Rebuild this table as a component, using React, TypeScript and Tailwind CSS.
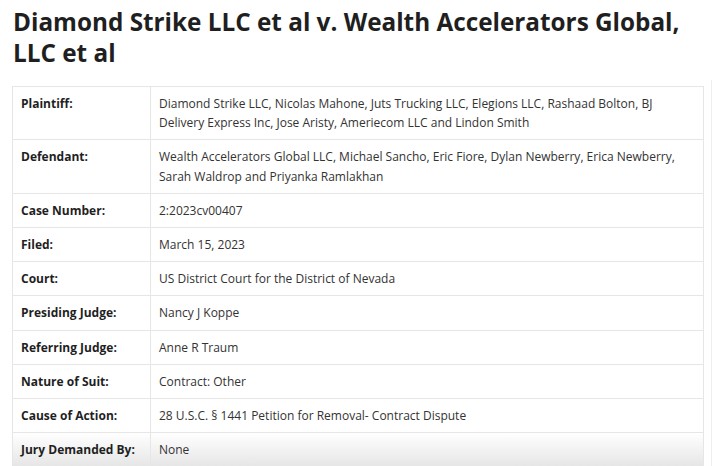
import React from "react"

const rows: { label: string; value: string }[] = [
  {
    label: "Plaintiff:",
    value:
      "Diamond Strike LLC, Nicolas Mahone, Juts Trucking LLC, Elegions LLC, Rashaad Bolton, BJ Delivery Express Inc, Jose Aristy, Ameriecom LLC and Lindon Smith",
  },
  {
    label: "Defendant:",
    value:
      "Wealth Accelerators Global LLC, Michael Sancho, Eric Fiore, Dylan Newberry, Erica Newberry, Sarah Waldrop and Priyanka Ramlakhan",
  },
  { label: "Case Number:", value: "2:2023cv00407" },
  { label: "Filed:", value: "March 15, 2023" },
  { label: "Court:", value: "US District Court for the District of Nevada" },
  { label: "Presiding Judge:", value: "Nancy J Koppe" },
  { label: "Referring Judge:", value: "Anne R Traum" },
  { label: "Nature of Suit:", value: "Contract: Other" },
  { label: "Cause of Action:", value: "28 U.S.C. § 1441 Petition for Removal- Contract Dispute" },
  { label: "Jury Demanded By:", value: "None" },
]

export default function App() {
  return (
    <div
      className="relative h-[466px] w-[717px] overflow-hidden bg-white"
      style={{ fontFamily: '"Open Sans", sans-serif' }}
    >
      <div className="pl-[13px] pr-[13px] pt-[6px]">
        <h1 className="text-[24.3px] font-bold leading-[31px] text-[#1f1f1f]">
          Diamond Strike LLC et al v. Wealth Accelerators Global, LLC et al
        </h1>
      </div>

      <div className="ml-[12px] mt-[18px] w-[692px] border-t border-l border-r border-[#e6e6e6]">
        {rows.map((r, i) => (
          <div
            key={r.label}
            className={
              i === rows.length - 1
                ? "flex border-b border-[#e6e6e6] bg-gradient-to-b from-white to-[#e6e6e6]"
                : "flex border-b border-[#e6e6e6]"
            }
          >
            <div className="w-[138px] shrink-0 whitespace-nowrap border-r border-[#e6e6e6] px-[8px] py-[7px] text-[12px] font-bold leading-[19.2px] text-[#1f1f1f]">
              {r.label}
            </div>
            <div className="flex-1 px-[8px] py-[7px] text-[12px] leading-[19.2px] text-[#333]">
              {r.value}
            </div>
          </div>
        ))}
      </div>

      <div className="absolute top-[80px] bottom-0 right-[5px] w-px bg-[#eeeeee]" />
    </div>
  )
}
